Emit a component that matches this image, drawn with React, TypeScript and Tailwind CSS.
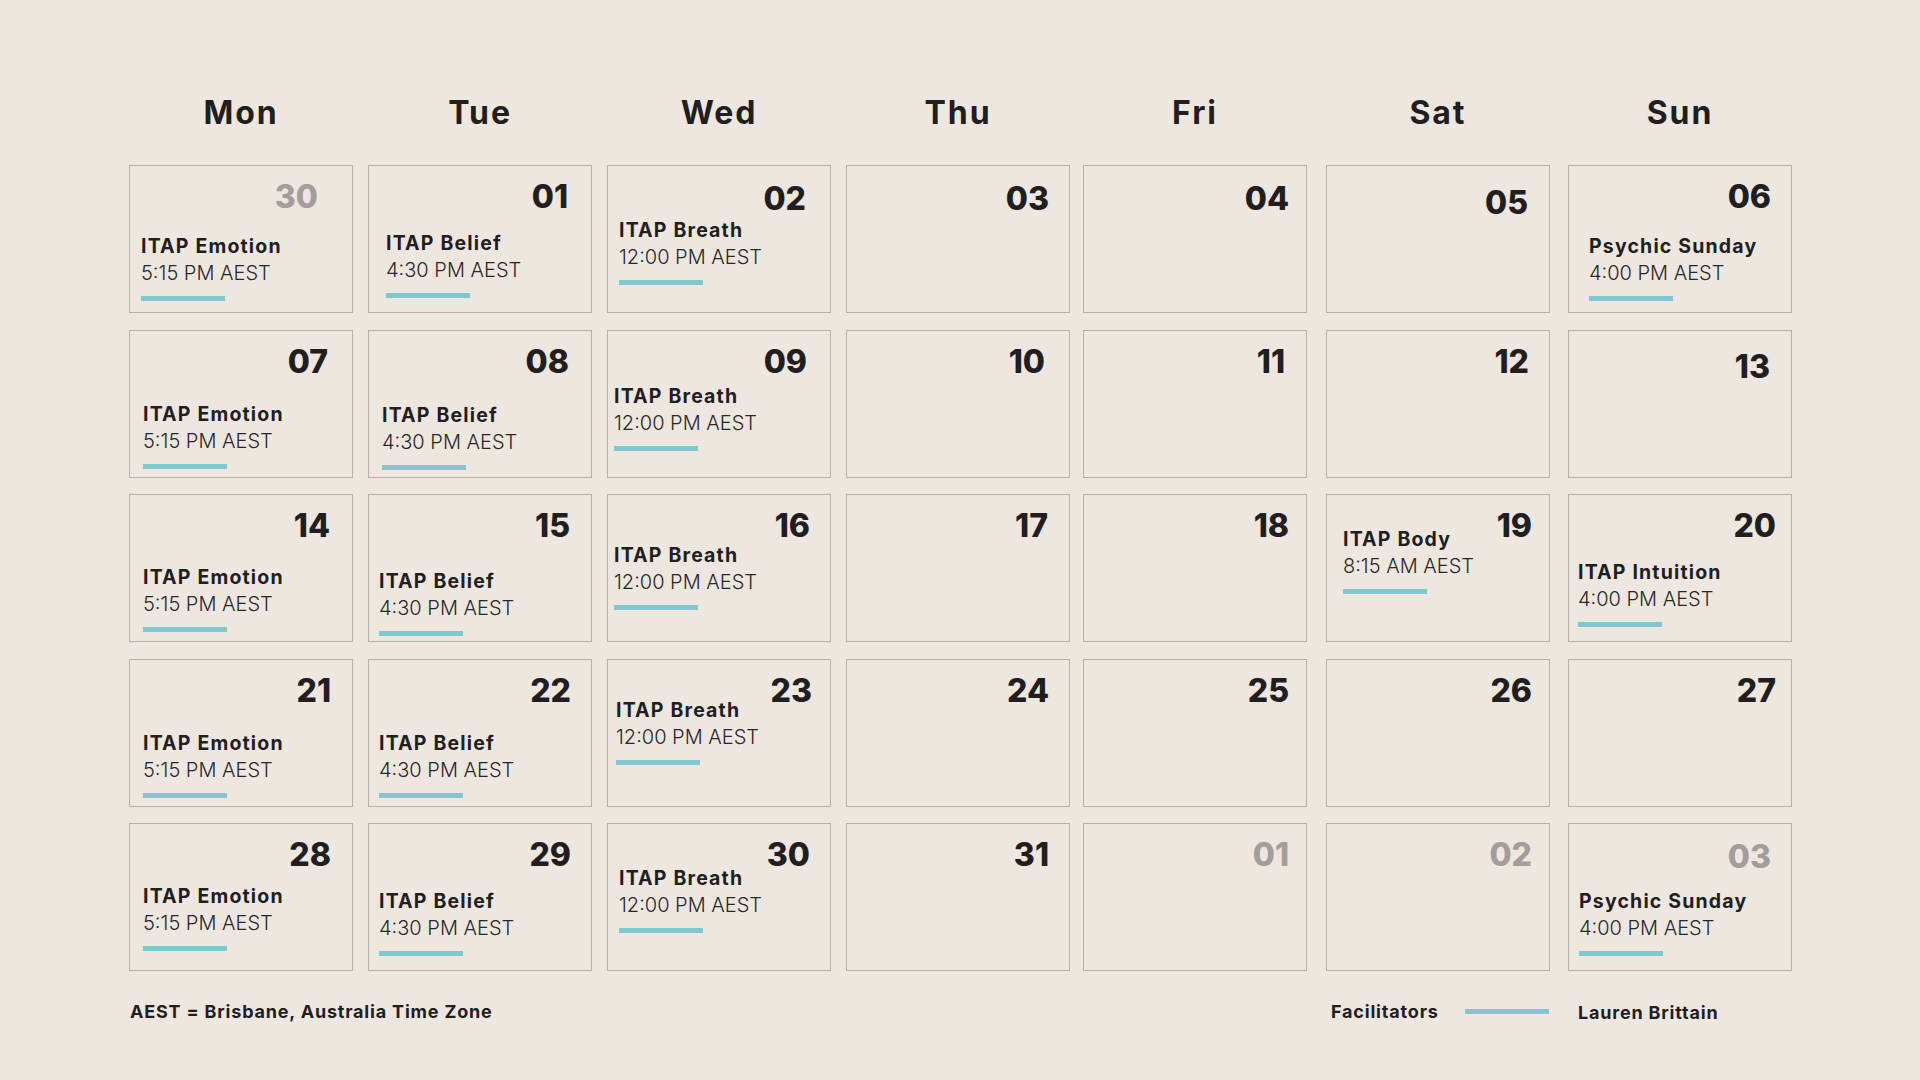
import React from "react";

type Ev = { title: string; time: string; mt: string; pl: string };
type Cell = { d: string; gray?: boolean; dr: string; dt?: string; ev?: Ev };

const days = ["Mon", "Tue", "Wed", "Thu", "Fri", "Sat", "Sun"];

const emotion = (mt: string, pl: string): Ev => ({ title: "ITAP Emotion", time: "5:15 PM AEST", mt, pl });
const belief = (mt: string, pl: string): Ev => ({ title: "ITAP Belief", time: "4:30 PM AEST", mt, pl });
const breath = (mt: string, pl: string): Ev => ({ title: "ITAP Breath", time: "12:00 PM AEST", mt, pl });

const cells: Cell[] = [
  { d: "30", gray: true, dr: "pr-[34px]", ev: emotion("mt-[20px]", "pl-[11px]") },
  { d: "01", dr: "pr-[23px]", ev: belief("mt-[17px]", "pl-[17px]") },
  { d: "02", dr: "pr-[24px]", dt: "mt-[2px]", ev: breath("mt-[2px]", "pl-[11px]") },
  { d: "03", dr: "pr-[20px]", dt: "mt-[2px]" },
  { d: "04", dr: "pr-[17px]", dt: "mt-[2px]" },
  { d: "05", dr: "pr-[21px]", dt: "mt-[6px]" },
  { d: "06", dr: "pr-[20px]", ev: { title: "Psychic Sunday", time: "4:00 PM AEST", mt: "mt-[20px]", pl: "pl-[20px]" } },

  { d: "07", dr: "pr-[24px]", ev: emotion("mt-[23px]", "pl-[13px]") },
  { d: "08", dr: "pr-[22px]", ev: belief("mt-[24px]", "pl-[13px]") },
  { d: "09", dr: "pr-[23px]", ev: breath("mt-[5px]", "pl-[6px]") },
  { d: "10", dr: "pr-[24px]" },
  { d: "11", dr: "pr-[21px]" },
  { d: "12", dr: "pr-[20px]" },
  { d: "13", dr: "pr-[21px]", dt: "mt-[5px]" },

  { d: "14", dr: "pr-[22px]", ev: emotion("mt-[22px]", "pl-[13px]") },
  { d: "15", dr: "pr-[21px]", ev: belief("mt-[26px]", "pl-[10px]") },
  { d: "16", dr: "pr-[20px]", ev: breath("mt-[0px]", "pl-[6px]") },
  { d: "17", dr: "pr-[21px]" },
  { d: "18", dr: "pr-[17px]" },
  { d: "19", dr: "pr-[17px]", ev: { title: "ITAP Body", time: "8:15 AM AEST", mt: "mt-[-16px]", pl: "pl-[16px]" } },
  { d: "20", dr: "pr-[15px]", ev: { title: "ITAP Intuition", time: "4:00 PM AEST", mt: "mt-[17px]", pl: "pl-[9px]" } },

  { d: "21", dr: "pr-[21px]", ev: emotion("mt-[23px]", "pl-[13px]") },
  { d: "22", dr: "pr-[20px]", ev: belief("mt-[23px]", "pl-[10px]") },
  { d: "23", dr: "pr-[18px]", ev: breath("mt-[-10px]", "pl-[8px]") },
  { d: "24", dr: "pr-[20px]" },
  { d: "25", dr: "pr-[17px]" },
  { d: "26", dr: "pr-[17px]" },
  { d: "27", dr: "pr-[15px]" },

  { d: "28", dr: "pr-[21px]", ev: emotion("mt-[12px]", "pl-[13px]") },
  { d: "29", dr: "pr-[20px]", ev: belief("mt-[17px]", "pl-[10px]") },
  { d: "30", dr: "pr-[20px]", ev: breath("mt-[-6px]", "pl-[11px]") },
  { d: "31", dr: "pr-[20px]" },
  { d: "01", gray: true, dr: "pr-[17px]" },
  { d: "02", gray: true, dr: "pr-[17px]" },
  { d: "03", gray: true, dr: "pr-[20px]", dt: "mt-[2px]", ev: { title: "Psychic Sunday", time: "4:00 PM AEST", mt: "mt-[15px]", pl: "pl-[10px]" } },
];

function DayCell({ c }: { c: Cell }) {
  return (
    <div className="w-[224px] h-[148px] border border-[#b9afa6] flex flex-col pt-[15px]">
      <div
        className={`flex justify-end h-[32px] leading-[32px] text-[32px] font-extrabold ${c.dr} ${c.dt ?? ""} ${
          c.gray ? "text-[#a39d9b]" : "text-[#221e1f]"
        }`}
      >
        {c.d}
      </div>
      {c.ev && (
        <div className={`flex flex-col items-start ${c.ev.mt} ${c.ev.pl}`}>
          <div className="h-[27px] leading-[27px] text-[19.5px] font-bold tracking-[0.06em] text-[#221e1f] whitespace-nowrap">
            {c.ev.title}
          </div>
          <div className="h-[27px] leading-[27px] text-[20px] font-light text-[#2a2627] whitespace-nowrap">{c.ev.time}</div>
          <div className="mt-[9px] h-[5px] w-[84px] bg-[#80c7cf]" />
        </div>
      )}
    </div>
  );
}

const colTemplate = "grid grid-cols-[239px_239px_239px_237px_243px_242px_224px]";

export default function App() {
  return (
    <div className="w-[1920px] h-[1080px] bg-[#ede7e0] font-[Inter,sans-serif] pl-[129px] pt-[93px]">
      <div className={colTemplate}>
        {days.map((d) => (
          <div
            key={d}
            className="w-[224px] h-[40px] flex items-center justify-center text-[32px] font-bold tracking-[0.06em] text-[#221e1f]"
          >
            {d}
          </div>
        ))}
      </div>
      <div className={`mt-[32px] ${colTemplate} gap-y-[16.5px]`}>
        {cells.map((c, i) => (
          <DayCell key={i} c={c} />
        ))}
      </div>
      <div className="mt-[28px] flex items-center h-[24px] text-[18px] font-bold tracking-[0.045em] text-[#221e1f]">
        <div className="w-[1202px] pl-[1px]">AEST = Brisbane, Australia Time Zone</div>
        <div className="w-[134px]">Facilitators</div>
        <div className="w-[84px] h-[5px] bg-[#80c7cf]" />
        <div className="ml-[29px] mt-[2px]">Lauren Brittain</div>
      </div>
    </div>
  );
}
